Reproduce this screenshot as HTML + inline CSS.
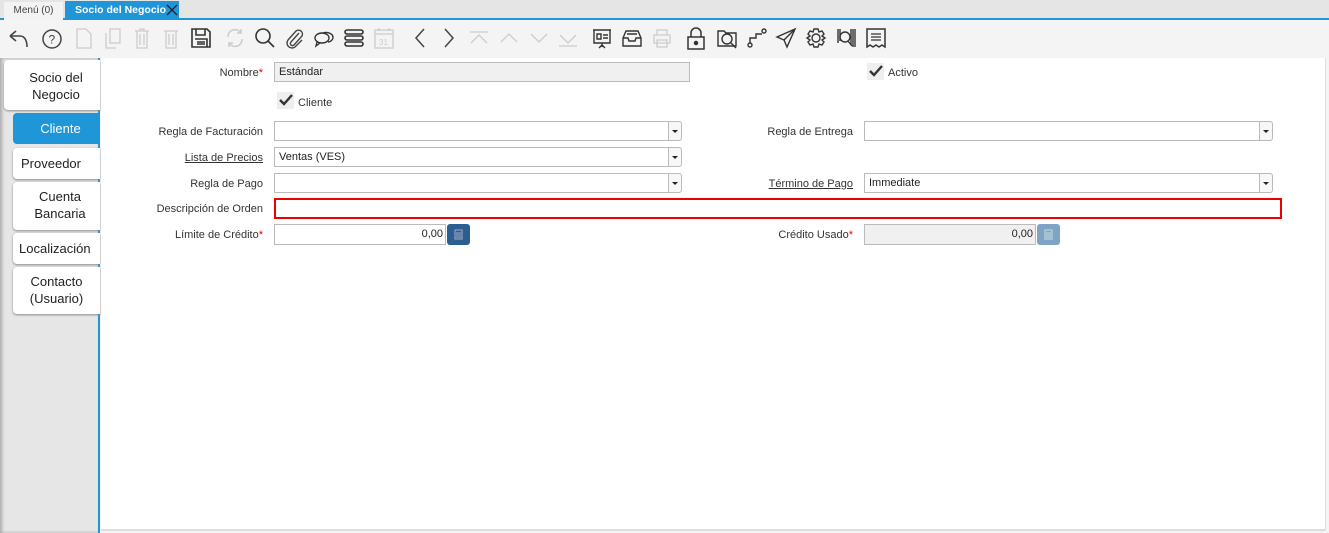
<!DOCTYPE html>
<html><head><meta charset="utf-8"><style>
*{box-sizing:border-box;margin:0;padding:0}
body{width:1329px;height:533px;overflow:hidden;background:#f4f4f4;font-family:"Liberation Sans",sans-serif;position:relative}
.a{position:absolute}
.tabbar{left:0;top:0;width:1329px;height:20px;background:#e5e5e5;border-bottom:2px solid #1e96d8}
.t1{left:4px;top:2px;width:59px;height:18px;background:#f3f3f3;font-size:10px;color:#444;text-align:center;line-height:17px}
.t2{left:65px;top:1px;width:114px;height:19px;background:#1e96d8;font-size:10.5px;color:#fff;font-weight:bold;padding-left:10px;line-height:18px}
.tb svg{position:absolute;top:27px}
.left{left:0;top:58px;width:100px;height:475px;background:#e6e6e6;border-right:2px solid #1e96d8;box-shadow:inset 2px 0 3px #aaa}
.vt{position:absolute;background:#fff;border-radius:4px 0 0 4px;box-shadow:0 1px 2px #888;font-size:13px;color:#222;text-align:center;line-height:17px}
.main{left:101px;top:58px;width:1225px;height:473px;background:#fff;border-right:1px solid #ddd;border-bottom:2px solid #ddd}
.l{position:absolute;font-size:11px;color:#333;text-align:right;white-space:nowrap}
.l u{text-decoration:underline}
.s{color:#e00}
.in{position:absolute;border:1px solid #bbb;background:#fff;font-size:11px;color:#222;padding-left:4px;line-height:18px;height:20px}
.dd{position:absolute;width:14px;height:20px;border:1px solid #bbb;background:#f7f7f7;border-radius:0 3px 3px 0}
.dd:after{content:"";position:absolute;left:3px;top:8px;border-left:3px solid transparent;border-right:3px solid transparent;border-top:3px solid #222}
.cb{position:absolute;width:17px;height:17px;background:#eee}
.btn{position:absolute;width:23px;height:21px;border-radius:3px}
</style></head><body>
<div class="a tabbar"></div>
<div class="a t1">Menú (0)</div>
<div class="a t2">Socio del Negocio</div>
<svg class="a" style="left:166px;top:4px" width="12" height="12"><path d="M1 1L11 11M11 1L1 11" stroke="#223" stroke-width="1.3"/></svg>

<div class="tb" style="position:absolute;left:0;top:0">
<svg style="left:7px" width="24" height="24" fill="none" stroke="#444" stroke-width="1.6"><path d="M3 9L9 4M3 9L9 14M3 9H13C18 9 20 14 20 20"/></svg>
<svg style="left:41px" width="22" height="22" fill="none" stroke="#444" stroke-width="1.5"><circle cx="11" cy="12" r="9"/><text x="7.5" y="16.5" font-size="12" fill="#444" stroke="none" font-family="Liberation Sans">?</text></svg>
<svg style="left:74px" width="20" height="22" fill="none" stroke="#ccc" stroke-width="1.3"><path d="M3 2H12L17 7V21H3Z"/></svg>
<svg style="left:103px" width="20" height="22" fill="none" stroke="#ccc" stroke-width="1.3"><path d="M7 2H17V16H7ZM3 6V21H13"/></svg>
<svg style="left:132px" width="20" height="22" fill="none" stroke="#ccc" stroke-width="1.3"><path d="M3 4H17M8 4V2H12V4M5 4V21H15V4M8 7V18M12 7V18"/></svg>
<svg style="left:161px" width="20" height="22" fill="none" stroke="#ccc" stroke-width="1.3"><path d="M3 4H17M5 4V21H15V4M8 7V18M12 7V18"/></svg>
<svg style="left:190px" width="22" height="22" fill="none" stroke="#333" stroke-width="1.6"><path d="M2 2H17L20 5V20H2ZM6 2V8H15V2M5 12H17V20M7 15H15M7 17H15"/></svg>
<svg style="left:224px" width="22" height="22" fill="none" stroke="#ccc" stroke-width="1.5"><path d="M4 10A7 7 0 0 1 17 6M18 12A7 7 0 0 1 5 16M17 2V6H13M5 20V16H9"/></svg>
<svg style="left:254px" width="22" height="22" fill="none" stroke="#333" stroke-width="1.6"><circle cx="9" cy="9" r="7"/><path d="M14 14L20 20"/></svg>
<svg style="left:284px" width="22" height="22" fill="none" stroke="#444" stroke-width="1.4"><path d="M15 6L7 15A2 2 0 0 0 10 18L18 9A4 4 0 0 0 12 4L4 13A5 5 0 0 0 11 20L18 13"/></svg>
<svg style="left:313px" width="22" height="22" fill="none" stroke="#333" stroke-width="1.4"><ellipse cx="9" cy="11" rx="7" ry="5"/><path d="M10 6A7 5 0 0 1 20 11A6 5 0 0 1 15 15M4 15L3 19L7 16"/></svg>
<svg style="left:343px" width="22" height="22" fill="none" stroke="#333" stroke-width="1.6"><rect x="2" y="3" width="18" height="4" rx="2"/><rect x="2" y="9" width="18" height="4" rx="2"/><rect x="2" y="15" width="18" height="4" rx="2"/></svg>
<svg style="left:373px" width="22" height="22" fill="none" stroke="#ccc" stroke-width="1.3"><rect x="2" y="3" width="18" height="18"/><path d="M2 7H20M6 1V4M16 1V4"/><text x="6" y="18" font-size="8" fill="#ccc" stroke="none">31</text></svg>
<svg style="left:409px" width="22" height="22" fill="none" stroke="#444" stroke-width="1.5"><path d="M15 2L7 11L15 20"/></svg>
<svg style="left:438px" width="22" height="22" fill="none" stroke="#444" stroke-width="1.5"><path d="M7 2L15 11L7 20"/></svg>
<svg style="left:468px" width="22" height="22" fill="none" stroke="#ccc" stroke-width="1.3"><path d="M2 5H20M3 16L11 8L19 16"/></svg>
<svg style="left:498px" width="22" height="22" fill="none" stroke="#ccc" stroke-width="1.3"><path d="M3 15L11 7L19 15"/></svg>
<svg style="left:528px" width="22" height="22" fill="none" stroke="#ccc" stroke-width="1.3"><path d="M3 7L11 15L19 7"/></svg>
<svg style="left:557px" width="22" height="22" fill="none" stroke="#ccc" stroke-width="1.3"><path d="M2 19H20M3 8L11 16L19 8"/></svg>
<svg style="left:591px" width="22" height="22" fill="none" stroke="#333" stroke-width="1.4"><path d="M2 3H20M3 3V16H19V3M6 7H10V12H6ZM12 8H17M12 11H17M11 16V20M8 21L11 18L14 21"/></svg>
<svg style="left:621px" width="22" height="22" fill="none" stroke="#333" stroke-width="1.4"><path d="M5 4H17L20 11V19H2V11ZM2 11H7L8 14H14L15 11H20M6 7H16"/></svg>
<svg style="left:651px" width="22" height="22" fill="none" stroke="#ccc" stroke-width="1.3"><path d="M6 8V3H16V8M3 8H19V16H3ZM6 13H16V20H6Z"/></svg>
<svg style="left:685px" width="22" height="24" fill="none" stroke="#333" stroke-width="1.5"><path d="M6 10V6A5 5 0 0 1 16 6V10M3 10H19V22H3Z"/><circle cx="11" cy="16" r="1.5" fill="#333"/></svg>
<svg style="left:716px" width="22" height="22" fill="none" stroke="#333" stroke-width="1.4"><path d="M2 4H8L10 6H20V19H2Z"/><circle cx="11" cy="12" r="5"/><path d="M15 16L20 21"/></svg>
<svg style="left:746px" width="22" height="22" fill="none" stroke="#333" stroke-width="1.4"><circle cx="4" cy="18" r="2"/><circle cx="18" cy="4" r="2"/><path d="M4 16V11H10V7H16"/></svg>
<svg style="left:775px" width="22" height="22" fill="none" stroke="#333" stroke-width="1.4"><path d="M20 2L2 10L9 13L12 20ZM20 2L9 13"/></svg>
<svg style="left:805px" width="22" height="22" fill="none" stroke="#333" stroke-width="1.4"><circle cx="11" cy="11" r="4"/><path d="M9 2H13L14 5L17 4L19 7L17 9L20 11L17 13L19 15L17 18L14 17L13 20H9L8 17L5 18L3 15L5 13L2 11L5 9L3 7L5 4L8 5Z"/></svg>
<svg style="left:835px" width="22" height="22" fill="none" stroke="#333" stroke-width="1.4"><path d="M3 2V16M5 2V14M16 2V18M18 2V20M20 2V20"/><circle cx="10" cy="10" r="5"/><path d="M13 14L17 19"/></svg>
<svg style="left:865px" width="22" height="22" fill="none" stroke="#333" stroke-width="1.5"><path d="M2 2H20V20L17 18L14 20L11 18L8 20L5 18L2 20Z"/><path d="M6 7H16M6 10H16M6 13H16" stroke-width="1.3"/></svg>
</div>

<div class="a left">
<div class="vt" style="left:4px;top:2px;width:96px;height:50px;padding-top:9px;padding-left:8px">Socio del<br>Negocio</div>
<div class="vt" style="left:13px;top:55px;width:87px;height:31px;background:#1e96d8;color:#fff;line-height:31px;box-shadow:none;padding-left:8px">Cliente</div>
<div class="vt" style="left:13px;top:90px;width:87px;height:31px;line-height:31px;text-align:left;padding-left:8px">Proveedor</div>
<div class="vt" style="left:13px;top:124px;width:87px;height:48px;padding-top:6px;padding-left:7px">Cuenta<br>Bancaria</div>
<div class="vt" style="left:13px;top:175px;width:87px;height:31px;line-height:31px;text-align:left;padding-left:6px">Localización</div>
<div class="vt" style="left:13px;top:209px;width:87px;height:47px;padding-top:6px">Contacto<br>(Usuario)</div>
</div>

<div class="a main"></div>
<div class="l" style="right:1066px;top:67px">Nombre<span class="s">*</span></div>
<div class="in" style="left:274px;top:62px;width:416px;background:#f0f0f0">Estándar</div>
<div class="cb" style="left:867px;top:63px"></div>
<svg class="a" style="left:868px;top:64px" width="16" height="14"><path d="M2 7L6 11L14 2" fill="none" stroke="#333" stroke-width="2.4"/></svg>
<div class="l" style="left:888px;top:67px;text-align:left">Activo</div>
<div class="cb" style="left:277px;top:92px"></div>
<svg class="a" style="left:278px;top:93px" width="16" height="14"><path d="M2 7L6 11L14 2" fill="none" stroke="#333" stroke-width="2.4"/></svg>
<div class="l" style="left:298px;top:97px;text-align:left">Cliente</div>

<div class="l" style="right:1066px;top:126px">Regla de Facturación</div>
<div class="in" style="left:274px;top:121px;width:395px"></div><div class="dd" style="left:668px;top:121px"></div>
<div class="l" style="right:476px;top:126px">Regla de Entrega</div>
<div class="in" style="left:864px;top:121px;width:396px"></div><div class="dd" style="left:1259px;top:121px"></div>

<div class="l" style="right:1066px;top:152px"><u>Lista de Precios</u></div>
<div class="in" style="left:274px;top:147px;width:395px">Ventas (VES)</div><div class="dd" style="left:668px;top:147px"></div>

<div class="l" style="right:1066px;top:178px">Regla de Pago</div>
<div class="in" style="left:274px;top:173px;width:395px"></div><div class="dd" style="left:668px;top:173px"></div>
<div class="l" style="right:476px;top:178px"><u>Término de Pago</u></div>
<div class="in" style="left:864px;top:173px;width:396px">Immediate</div><div class="dd" style="left:1259px;top:173px"></div>

<div class="l" style="right:1066px;top:203px">Descripción de Orden</div>
<div class="in" style="left:274px;top:198px;width:1008px;height:21px;border:2px solid #e00"></div>

<div class="l" style="right:1066px;top:229px">Límite de Crédito<span class="s">*</span></div>
<div class="in" style="left:274px;top:224px;width:172px;height:21px;text-align:right;padding-right:2px">0,00</div>
<div class="btn" style="left:447px;top:224px;background:#2c5f8f"></div>
<svg class="a" style="left:454px;top:229px" width="9" height="11"><rect x="1" y="1" width="7" height="9" fill="none" stroke="#aac" stroke-width="1"/><path d="M2 4H7M2 6H7M2 8H7" stroke="#aac"/></svg>
<div class="l" style="right:476px;top:229px">Crédito Usado<span class="s">*</span></div>
<div class="in" style="left:864px;top:224px;width:172px;height:21px;text-align:right;padding-right:2px;background:#f0f0f0">0,00</div>
<div class="btn" style="left:1037px;top:224px;background:#7ea3c4"></div>
<svg class="a" style="left:1044px;top:229px" width="9" height="11"><rect x="1" y="1" width="7" height="9" fill="none" stroke="#cdd" stroke-width="1"/><path d="M2 4H7M2 6H7M2 8H7" stroke="#cdd"/></svg>
</body></html>
